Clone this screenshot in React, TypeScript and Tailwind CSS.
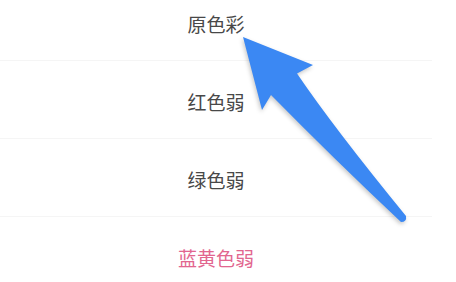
import React from 'react';

const modes = [
  { label: '原色彩', active: false },
  { label: '红色弱', active: false },
  { label: '绿色弱', active: false },
  { label: '蓝黄色弱', active: true },
];

const Arrow = () => (
  <svg
    className="absolute left-0 top-0 pointer-events-none"
    width="456"
    height="282"
    viewBox="0 0 456 282"
    style={{ filter: 'drop-shadow(-1px 2px 2px rgba(0,0,0,0.22))' }}
  >
    <path
      d="M243 37 L313 65 L297 73.5 Q334 128 406 216 Q407 222 401 222 Q335 160 271 95 L262 110 Z"
      fill="#3b88f3"
      strokeLinejoin="round"
    />
  </svg>
);

export default function App() {
  return (
    <div
      className="relative w-[456px] h-[282px] overflow-hidden bg-white"
      style={{ fontFamily: '"Noto Sans CJK SC", "Noto Sans", sans-serif' }}
    >
      <div className="w-[432px] -mt-[17px] flex flex-col">
        {modes.map((m) => (
          <div
            key={m.label}
            className="h-[78px] pt-[4px] flex items-center justify-center border-b border-[#f5f5f5]"
          >
            <span
              className={`text-[19px] leading-none ${
                m.active ? 'text-[#e2668f]' : 'text-[#484848]'
              }`}
            >
              {m.label}
            </span>
          </div>
        ))}
      </div>
      <Arrow />
    </div>
  );
}
